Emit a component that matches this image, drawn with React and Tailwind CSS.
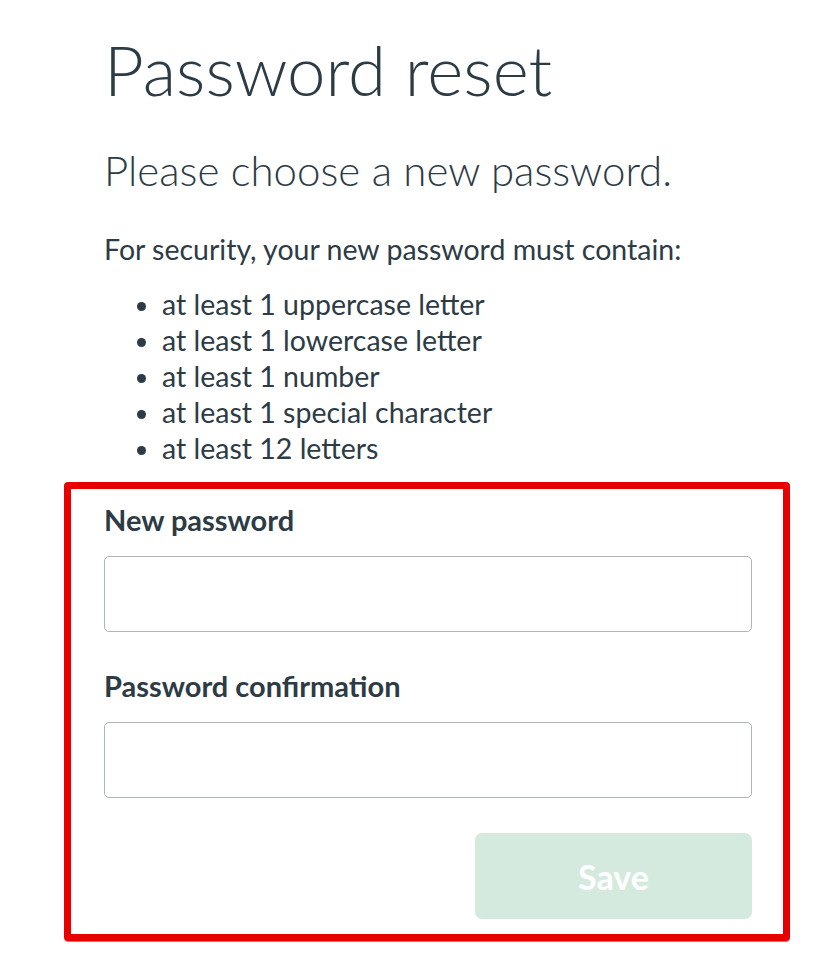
import React from "react";

export default function App() {
  const items = [
    "at least 1 uppercase letter",
    "at least 1 lowercase letter",
    "at least 1 number",
    "at least 1 special character",
    "at least 12 letters",
  ];
  return (
    <div className="min-h-[978px] w-[816px] bg-white text-[#2d3b45]" style={{ fontFamily: "Lato, 'Liberation Sans', sans-serif" }}>
      <div className="pt-[28px] pl-[104px]">
        <h1 className="text-[69px] font-light leading-[84px]">Password reset</h1>
        <h2 className="mt-[32px] text-[42px] font-light leading-[52px]">Please choose a new password.</h2>
        <p className="mt-[35px] text-[28.5px] leading-[36px]">For security, your new password must contain:</p>
        <ul className="mt-[19px] list-disc pl-[58px] text-[28.5px] leading-[36px]">
          {items.map((t) => (
            <li key={t}>{t}</li>
          ))}
        </ul>
      </div>
      <div className="mt-[16px] ml-[64px] w-[726px] rounded-[4px] border-[7px] border-[#e60000] pl-[33px] pr-[31px] pt-[15px] pb-[15px] shadow-[0_1px_0_#8a8f95]">
        <label className="block text-[29px] font-bold leading-[32px]">New password</label>
        <input type="password" className="mt-[20px] block h-[76px] w-full rounded-[5px] border border-[#b0b5ba] bg-white" />
        <label className="mt-[38px] block text-[29px] font-bold leading-[32px]">Password confirmation</label>
        <input type="password" className="mt-[20px] block h-[76px] w-full rounded-[5px] border border-[#b0b5ba] bg-white" />
        <div className="mt-[35px] flex justify-end">
          <button className="h-[86px] w-[277px] rounded-[7px] bg-[#d5eadf] text-[34px] font-bold text-white">Save</button>
        </div>
      </div>
    </div>
  );
}
